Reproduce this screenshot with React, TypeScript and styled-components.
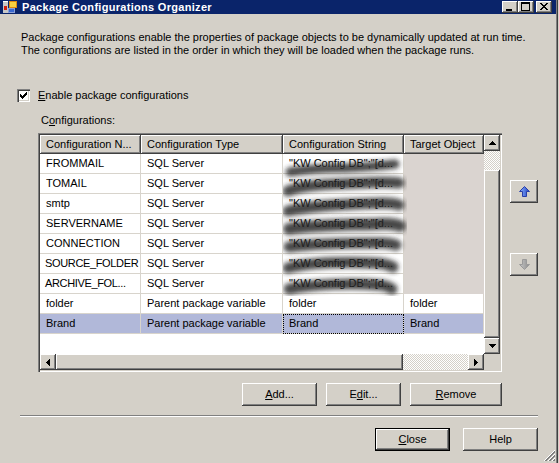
import React from 'react';
import styled, { createGlobalStyle, css } from 'styled-components';

const FACE = '#d4d0c8';
const LINE = '#d8d4cc';
const READONLY = '#dad4d0';
const SELECTED = '#b1b8d9';
const COLS = '101px 142px 121px 80px';

const GlobalStyle = createGlobalStyle`
  html, body { margin: 0; padding: 0; background: ${FACE}; }
  body { font-family: "Liberation Sans", Arial, sans-serif; font-size: 11px; color: #000; }
  *, *::before, *::after { box-sizing: border-box; }
`;

const raised = css`
  background: ${FACE};
  box-shadow: inset -1px -1px #404040, inset 1px 1px #fff, inset -2px -2px #808080, inset 2px 2px ${FACE};
`;

const sunken = css`
  box-shadow: inset 1px 1px #808080, inset 2px 2px #404040, inset -1px -1px #fff, inset -2px -2px ${FACE};
`;

const checker = css`
  background-color: #fff;
  background-image: repeating-conic-gradient(${FACE} 0 25%, #fff 0 50%);
  background-size: 2px 2px;
`;

const Window = styled.div`
  position: relative;
  width: 559px;
  height: 463px;
  background: ${FACE};
  display: flex;
  flex-direction: column;
  overflow: hidden;
  box-shadow: inset -1px 0 ${FACE}, inset -2px 0 #404040, inset -3px 0 #808080;
`;

const TitleBar = styled.div`
  flex: none;
  height: 14px;
  margin-right: 3px;
  background: #0a246a;
  display: flex;
  align-items: center;
  padding: 0 4px 0 2px;
`;

const TitleText = styled.span`
  flex: 1;
  margin-left: 4px;
  color: #fff;
  font-weight: bold;
  font-size: 11px;
  letter-spacing: 0.3px;
  white-space: nowrap;
  line-height: 14px;
`;

const CaptionButtons = styled.div`
  display: flex;
  align-self: flex-start;
  margin-top: 1px;
`;

const CaptionButton = styled.div<{ $gap?: boolean }>`
  ${raised};
  width: 16px;
  height: 12px;
  margin-left: ${(p) => (p.$gap ? 2 : 0)}px;
  display: flex;
`;

const Description = styled.p`
  margin: 17px 0 0 21px;
  line-height: 13px;
  white-space: nowrap;
`;

const CheckRow = styled.label`
  display: flex;
  align-items: center;
  gap: 8px;
  height: 13px;
  margin: 32px 0 0 17px;
  line-height: 13px;
`;

const CheckBox = styled.span`
  width: 13px;
  height: 13px;
  background: #fff;
  ${sunken};
  display: flex;
  align-items: center;
  justify-content: center;
`;

const SectionLabel = styled.div`
  margin: 12px 0 0 41px;
  line-height: 13px;
`;

const GridArea = styled.div`
  display: flex;
  margin: 6px 0 0 38px;
`;

const GridFrame = styled.div`
  ${sunken};
  background: ${FACE};
  width: 464px;
  height: 239px;
  padding: 2px;
  display: grid;
  grid-template-columns: 444px 16px;
  grid-template-rows: 219px 16px;
`;

const Table = styled.div`
  background: #fff;
  display: flex;
  flex-direction: column;
  overflow: hidden;
`;

const HeaderRow = styled.div`
  flex: none;
  display: grid;
  grid-template-columns: ${COLS};
  height: 19px;
  background: ${FACE};
`;

const HeaderCell = styled.div`
  box-shadow: inset -1px -1px #404040, inset 1px 1px #fff, inset -2px -2px #808080;
  padding-left: 6px;
  line-height: 18px;
  white-space: nowrap;
  overflow: hidden;
`;

const Body = styled.div`
  position: relative;
`;

const DataRow = styled.div`
  display: grid;
  grid-template-columns: ${COLS};
  height: 20px;
`;

const DataCell = styled.div<{ $bg: string; $line: string; $focus?: boolean; $tight?: boolean }>`
  background: ${(p) => p.$bg};
  border-right: 1px solid ${(p) => p.$line};
  border-bottom: 1px solid ${(p) => p.$line};
  padding-left: ${(p) => (p.$tight ? 5 : 6)}px;
  line-height: 19px;
  letter-spacing: ${(p) => (p.$tight ? '-0.35px' : 'normal')};
  white-space: nowrap;
  overflow: hidden;
  outline: ${(p) => (p.$focus ? '1px dotted #000' : 'none')};
  outline-offset: -1px;
`;

const Smudge = styled.svg`
  position: absolute;
  left: 243px;
  top: 0;
  pointer-events: none;
`;

const VScroll = styled.div`
  display: flex;
  flex-direction: column;
`;

const HScroll = styled.div`
  display: flex;
`;

const ScrollButton = styled.div`
  ${raised};
  flex: none;
  width: 16px;
  height: 16px;
  display: flex;
  align-items: center;
  justify-content: center;
`;

const Track = styled.div<{ $size?: number }>`
  ${checker};
  flex: ${(p) => (p.$size ? `0 0 ${p.$size}px` : '1')};
`;

const Thumb = styled.div<{ $size?: number }>`
  ${raised};
  flex: ${(p) => (p.$size ? `0 0 ${p.$size}px` : '1')};
`;

const Corner = styled.div`
  background: ${FACE};
`;

const SideButtons = styled.div`
  display: flex;
  flex-direction: column;
  margin-left: 8px;
`;

const SideButton = styled.div<{ $top: number }>`
  ${raised};
  width: 28px;
  height: 23px;
  margin-top: ${(p) => p.$top}px;
  display: flex;
  align-items: center;
  justify-content: center;
`;

const ButtonRow = styled.div<{ $top: number; $left: number; $width: number; $gap: number }>`
  display: flex;
  justify-content: flex-end;
  gap: ${(p) => p.$gap}px;
  margin: ${(p) => p.$top}px 0 0 ${(p) => p.$left}px;
  width: ${(p) => p.$width}px;
`;

const PushButton = styled.div<{ $w: number; $default?: boolean }>`
  width: ${(p) => p.$w}px;
  height: 23px;
  background: ${FACE};
  display: flex;
  align-items: center;
  justify-content: center;
  line-height: 13px;
  box-shadow: ${(p) =>
    p.$default
      ? `inset 0 0 0 1px #000, inset -2px -2px #404040, inset 2px 2px #fff, inset -3px -3px #808080`
      : `inset -1px -1px #404040, inset 1px 1px #fff, inset -2px -2px #808080, inset 2px 2px ${FACE}`};
`;

const Separator = styled.div`
  margin: 9px 0 0 20px;
  width: 518px;
  height: 2px;
  border-top: 1px solid #808080;
  border-bottom: 1px solid #fff;
`;

const Grip = styled.svg`
  position: absolute;
  right: 3px;
  bottom: 1px;
`;

const Px = ({ d, w, h, fill = '#000' }: { d: string; w: number; h: number; fill?: string }) => (
  <svg width={w} height={h} viewBox={`0 0 ${w} ${h}`} shapeRendering="crispEdges">
    <path d={d} fill={fill} />
  </svg>
);

const UP = 'M3 0h1v1h-1z M2 1h3v1h-3z M1 2h5v1h-5z M0 3h7v1h-7z';
const DOWN = 'M0 0h7v1h-7z M1 1h5v1h-5z M2 2h3v1h-3z M3 3h1v1h-1z';
const LEFT = 'M3 0h1v7h-1z M2 1h1v5h-1z M1 2h1v3h-1z M0 3h1v1h-1z';
const RIGHT = 'M0 0h1v7h-1z M1 1h1v5h-1z M2 2h1v3h-1z M3 3h1v1h-1z';

const TitleIcon = () => (
  <svg width="16" height="14" viewBox="0 0 16 14" shapeRendering="crispEdges">
    <rect x="0" y="0" width="16" height="14" fill="#0a246a" />
    <rect x="1" y="1" width="5" height="12" fill="#c8c8c8" />
    <rect x="1" y="1" width="5" height="1" fill="#fff" />
    <rect x="2" y="6" width="3" height="4" fill="#d02010" />
    <rect x="7" y="1" width="8" height="7" fill="#e08a10" />
    <rect x="8" y="2" width="6" height="5" fill="#f8d040" />
    <rect x="6" y="8" width="7" height="5" fill="#8aa0d8" />
    <rect x="7" y="9" width="5" height="3" fill="#3a68d0" />
  </svg>
);

const CaptionGlyph = ({ kind }: { kind: 'min' | 'max' | 'close' }) => {
  const d =
    kind === 'min'
      ? 'M4 8h6v2h-6z'
      : kind === 'max'
      ? 'M3 1h9v2h-9z M3 3h1v6h-1z M11 3h1v6h-1z M3 9h9v1h-9z'
      : 'M4 2h2v1h-2z M10 2h2v1h-2z M5 3h2v1h-2z M9 3h2v1h-2z M6 4h4v1h-4z M7 5h2v1h-2z M6 6h4v1h-4z M5 7h2v1h-2z M9 7h2v1h-2z M4 8h2v1h-2z M10 8h2v1h-2z';
  return <Px d={d} w={16} h={12} />;
};

const CHECK =
  'M6 0h1v1h-1z M5 1h2v1h-2z M0 2h1v1h-1z M4 2h3v1h-3z M0 3h2v1h-2z M3 3h3v1h-3z M0 4h5v1h-5z M1 5h3v1h-3z M2 6h1v1h-1z';

const BlueArrow = ({ down }: { down?: boolean }) => (
  <svg width="11" height="11" viewBox="0 0 11 11">
    <defs>
      <linearGradient id={down ? 'ga' : 'gb'} x1="0" y1="0" x2="1" y2="0">
        <stop offset="0" stopColor={down ? '#c8c8c8' : '#8fb4ff'} />
        <stop offset="1" stopColor={down ? '#8c8c8c' : '#1f43c4'} />
      </linearGradient>
    </defs>
    <path
      d={down ? 'M5.5 10.5 L10.5 5.5 L7.5 5.5 L7.5 0.5 L3.5 0.5 L3.5 5.5 L0.5 5.5 Z' : 'M5.5 0.5 L10.5 5.5 L7.5 5.5 L7.5 10.5 L3.5 10.5 L3.5 5.5 L0.5 5.5 Z'}
      fill={`url(#${down ? 'ga' : 'gb'})`}
      stroke={down ? '#9a9a9a' : '#2a3fa8'}
      strokeWidth="1"
    />
  </svg>
);

type Row = { name: string; type: string; str: string; target: string; sql?: boolean; selected?: boolean };

const KW = '"KW Config DB";"[d...';

const rows: Row[] = [
  { name: 'FROMMAIL', type: 'SQL Server', str: KW, target: '', sql: true },
  { name: 'TOMAIL', type: 'SQL Server', str: KW, target: '', sql: true },
  { name: 'smtp', type: 'SQL Server', str: KW, target: '', sql: true },
  { name: 'SERVERNAME', type: 'SQL Server', str: KW, target: '', sql: true },
  { name: 'CONNECTION', type: 'SQL Server', str: KW, target: '', sql: true },
  { name: 'SOURCE_FOLDER', type: 'SQL Server', str: KW, target: '', sql: true },
  { name: 'ARCHIVE_FOL...', type: 'SQL Server', str: KW, target: '', sql: true },
  { name: 'folder', type: 'Parent package variable', str: 'folder', target: 'folder' },
  { name: 'Brand', type: 'Parent package variable', str: 'Brand', target: 'Brand', selected: true },
];

const smudges = [
  { d: 'M7 18 C 25 15, 45 14, 62 14 C 80 13, 98 12, 112 10', w: 9 },
  { d: 'M5 37 C 20 31, 50 30, 80 29 C 95 28, 108 28, 116 29', w: 11 },
  { d: 'M5 57 C 30 51, 70 50, 100 49 C 108 49, 113 50, 116 51', w: 11 },
  { d: 'M6 75 C 30 71, 70 71, 95 70 C 106 69, 112 70, 117 72', w: 12 },
  { d: 'M6 93 C 30 90, 70 89, 100 89 C 106 89, 110 90, 113 91', w: 11 },
  { d: 'M5 114 C 25 109, 60 108, 90 109 C 100 109, 106 111, 110 113', w: 11 },
  { d: 'M6 135 C 30 130, 70 129, 95 131 C 102 131, 106 133, 109 135', w: 11 },
];

export default function App() {
  return (
    <>
      <GlobalStyle />
      <Window>
        <TitleBar>
          <TitleIcon />
          <TitleText>Package Configurations Organizer</TitleText>
          <CaptionButtons>
            <CaptionButton>
              <CaptionGlyph kind="min" />
            </CaptionButton>
            <CaptionButton>
              <CaptionGlyph kind="max" />
            </CaptionButton>
            <CaptionButton $gap>
              <CaptionGlyph kind="close" />
            </CaptionButton>
          </CaptionButtons>
        </TitleBar>

        <Description>
          Package configurations enable the properties of package objects to be dynamically updated at run time.
          <br />
          The configurations are listed in the order in which they will be loaded when the package runs.
        </Description>

        <CheckRow>
          <CheckBox>
            <Px d={CHECK} w={7} h={7} />
          </CheckBox>
          <span>
            <u>E</u>nable package configurations
          </span>
        </CheckRow>

        <SectionLabel>
          C<u>o</u>nfigurations:
        </SectionLabel>

        <GridArea>
          <GridFrame>
            <Table>
              <HeaderRow>
                <HeaderCell>Configuration N...</HeaderCell>
                <HeaderCell>Configuration Type</HeaderCell>
                <HeaderCell>Configuration String</HeaderCell>
                <HeaderCell>Target Object</HeaderCell>
              </HeaderRow>
              <Body>
                {rows.map((r) => {
                  const bg = r.selected ? SELECTED : '#fff';
                  return (
                    <DataRow key={r.name}>
                      <DataCell $bg={bg} $line={LINE} $tight={r.name.length > 12}>
                        {r.name}
                      </DataCell>
                      <DataCell $bg={bg} $line={LINE}>{r.type}</DataCell>
                      <DataCell $bg={bg} $line={LINE} $focus={r.selected}>
                        {r.str}
                      </DataCell>
                      <DataCell $bg={r.sql ? READONLY : bg} $line={r.sql ? READONLY : LINE}>
                        {r.target}
                      </DataCell>
                    </DataRow>
                  );
                })}
                <Smudge width="124" height="142" viewBox="0 0 124 142">
                  <defs>
                    <filter id="blur" x="-20%" y="-50%" width="140%" height="200%">
                      <feGaussianBlur stdDeviation="2.4" />
                    </filter>
                  </defs>
                  <g filter="url(#blur)" fill="none" stroke="#262626" strokeLinecap="round" opacity="0.85">
                    {smudges.map((s, i) => (
                      <path key={i} d={s.d} strokeWidth={s.w} />
                    ))}
                  </g>
                </Smudge>
              </Body>
            </Table>
            <VScroll>
              <ScrollButton>
                <Px d={UP} w={7} h={4} />
              </ScrollButton>
              <Track $size={19} />
              <Thumb />
              <ScrollButton>
                <Px d={DOWN} w={7} h={4} />
              </ScrollButton>
            </VScroll>
            <HScroll>
              <ScrollButton>
                <Px d={LEFT} w={4} h={7} />
              </ScrollButton>
              <Thumb $size={347} />
              <Track />
              <ScrollButton>
                <Px d={RIGHT} w={4} h={7} />
              </ScrollButton>
            </HScroll>
            <Corner />
          </GridFrame>
          <SideButtons>
            <SideButton $top={47}>
              <BlueArrow />
            </SideButton>
            <SideButton $top={50}>
              <BlueArrow down />
            </SideButton>
          </SideButtons>
        </GridArea>

        <ButtonRow $top={11} $left={38} $width={464} $gap={9}>
          <PushButton $w={75}>
            <span>
              <u>A</u>dd...
            </span>
          </PushButton>
          <PushButton $w={75}>
            <span>
              E<u>d</u>it...
            </span>
          </PushButton>
          <PushButton $w={92}>
            <span>
              <u>R</u>emove
            </span>
          </PushButton>
        </ButtonRow>

        <Separator />

        <ButtonRow $top={11} $left={20} $width={518} $gap={13}>
          <PushButton $w={75} $default>
            <span>
              <u>C</u>lose
            </span>
          </PushButton>
          <PushButton $w={75}>Help</PushButton>
        </ButtonRow>

        <Grip width="13" height="13" viewBox="0 0 13 13" shapeRendering="crispEdges">
          <path d="M12 1 L1 12" stroke="#fff" />
          <path d="M12 2 L2 12 M12 3 L3 12" stroke="#808080" />
          <path d="M12 5 L5 12" stroke="#fff" />
          <path d="M12 6 L6 12 M12 7 L7 12" stroke="#808080" />
          <path d="M12 9 L9 12" stroke="#fff" />
          <path d="M12 10 L10 12 M12 11 L11 12" stroke="#808080" />
        </Grip>
      </Window>
    </>
  );
}
